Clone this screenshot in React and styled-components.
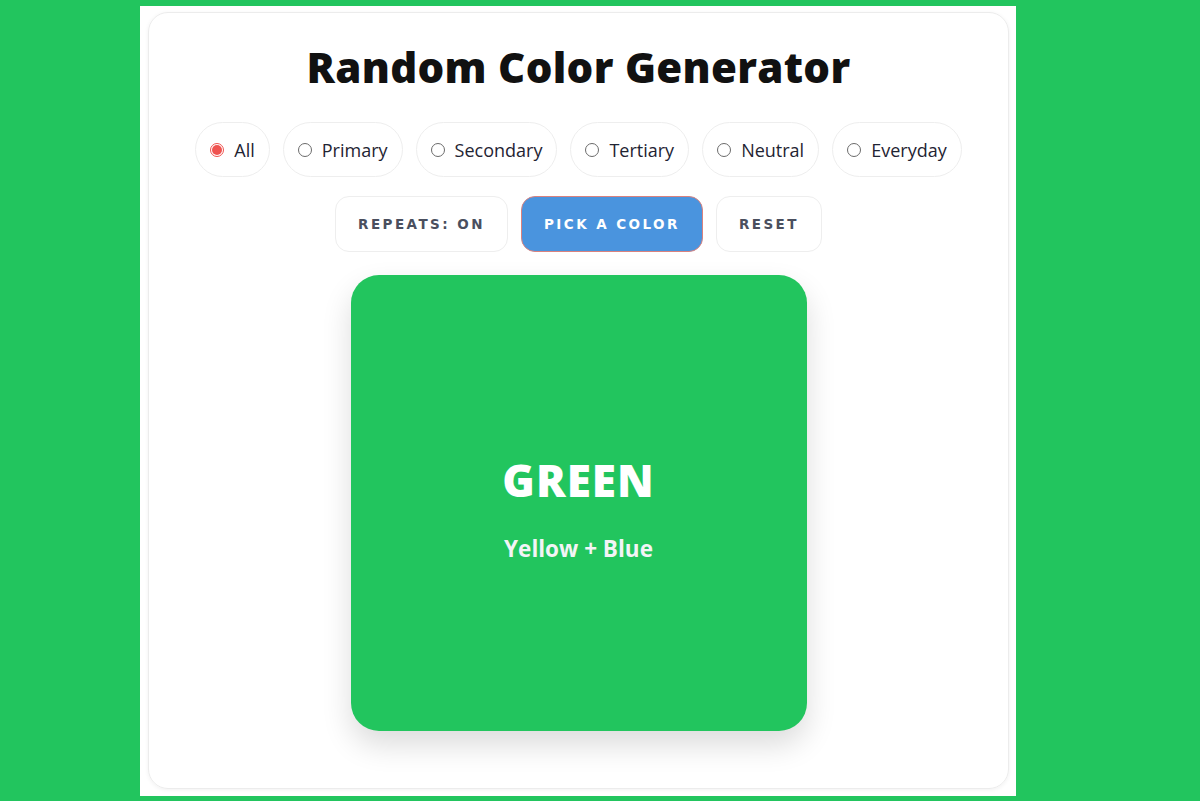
import React, { useState } from "react";
import styled, { createGlobalStyle } from "styled-components";

const GlobalStyle = createGlobalStyle`
  html, body {
    margin: 0;
    padding: 0;
    background: #22c55e;
    font-family: "Open Sans", "Noto Sans", sans-serif;
  }
`;

const Page = styled.div`
  min-height: 801px;
  padding: 6px 0 5px 140px;
  box-sizing: border-box;
`;

const Frame = styled.div`
  width: 876px;
  height: 790px;
  background: #fff;
  padding: 6px 7px 7px 8px;
  box-sizing: border-box;
`;

const Card = styled.div`
  height: 100%;
  border-radius: 20px;
  border: 1px solid #ececec;
  box-shadow: 0 1px 4px rgba(0, 0, 0, 0.06);
  display: flex;
  flex-direction: column;
  align-items: center;
  box-sizing: border-box;
`;

const Title = styled.h1`
  margin: 26px 0 0;
  font-size: 42px;
  font-weight: 800;
  color: #111;
  letter-spacing: 0.3px;
  line-height: 56px;
`;

const Options = styled.div`
  display: flex;
  gap: 13px;
  margin-top: 27px;
`;

const Pill = styled.label`
  display: flex;
  align-items: center;
  gap: 10px;
  height: 55px;
  padding: 0 14px;
  border: 1px solid #eeeeee;
  border-radius: 28px;
  box-sizing: border-box;
  font-size: 18px;
  color: #1f2433;
  cursor: pointer;
`;

const Radio = styled.span`
  width: 14px;
  height: 14px;
  border-radius: 50%;
  border: 1px solid ${(p) => (p.checked ? "#ef5350" : "#6b6b6b")};
  box-sizing: border-box;
  display: flex;
  align-items: center;
  justify-content: center;
  &::after {
    content: "";
    width: 10px;
    height: 10px;
    border-radius: 50%;
    background: ${(p) => (p.checked ? "#ef5350" : "transparent")};
  }
`;

const Actions = styled.div`
  display: flex;
  gap: 13px;
  margin-top: 19px;
`;

const Button = styled.button`
  height: 56px;
  padding: 0 22px;
  border-radius: 14px;
  border: 1px solid ${(p) => (p.primary ? "#d9827f" : "#eeeeee")};
  background: ${(p) => (p.primary ? "#4a94de" : "#fff")};
  color: ${(p) => (p.primary ? "#fff" : "#4a4f5e")};
  font-family: "DejaVu Sans", Verdana, sans-serif;
  font-weight: 700;
  font-size: 13.5px;
  letter-spacing: 2.45px;
  text-transform: uppercase;
  cursor: pointer;
`;

const Swatch = styled.div`
  width: 456px;
  height: 456px;
  margin-top: 23px;
  border-radius: 28px;
  background: ${(p) => p.color};
  box-shadow: 0 14px 30px rgba(0, 0, 0, 0.14);
  display: flex;
  flex-direction: column;
  align-items: center;
  justify-content: center;
  color: #fff;
`;

const ColorName = styled.div`
  font-size: 44px;
  font-weight: 800;
  letter-spacing: 1px;
  line-height: 50px;
  margin-top: 13px;
`;

const ColorMix = styled.div`
  font-size: 22.5px;
  font-weight: 700;
  color: #f3f4f6;
  margin-top: 28px;
`;

const categories = ["All", "Primary", "Secondary", "Tertiary", "Neutral", "Everyday"];

export default function App() {
  const [category, setCategory] = useState("All");
  const [repeats, setRepeats] = useState(true);

  return (
    <>
      <GlobalStyle />
      <Page>
        <Frame>
          <Card>
            <Title>Random Color Generator</Title>
            <Options>
              {categories.map((c) => (
                <Pill key={c} onClick={() => setCategory(c)}>
                  <Radio checked={category === c} />
                  {c}
                </Pill>
              ))}
            </Options>
            <Actions>
              <Button onClick={() => setRepeats(!repeats)}>
                Repeats: {repeats ? "On" : "Off"}
              </Button>
              <Button primary>Pick a Color</Button>
              <Button>Reset</Button>
            </Actions>
            <Swatch color="#22c55e">
              <ColorName>GREEN</ColorName>
              <ColorMix>Yellow + Blue</ColorMix>
            </Swatch>
          </Card>
        </Frame>
      </Page>
    </>
  );
}
